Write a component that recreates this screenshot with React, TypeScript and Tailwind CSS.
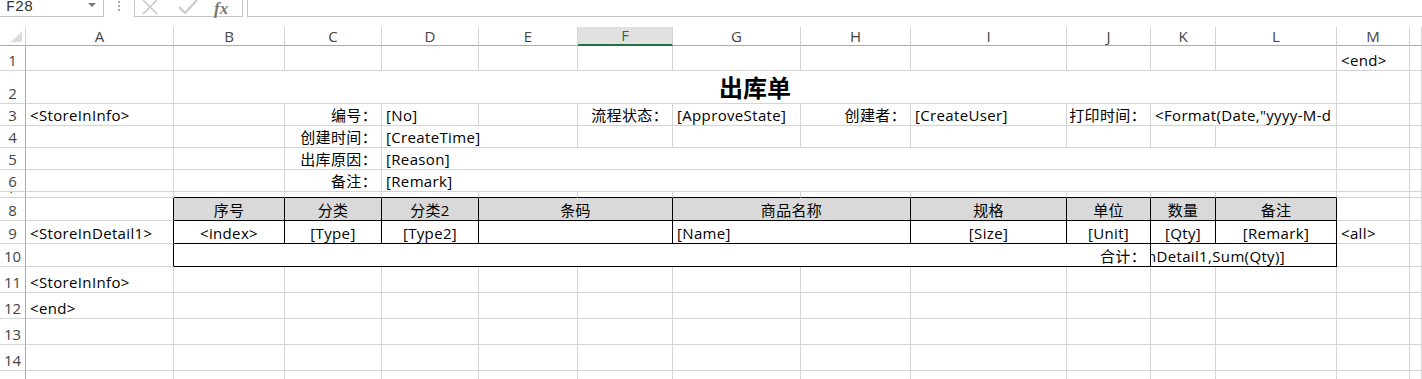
import clsx from "clsx";
import type { ReactNode } from "react";

type Cell = {
  t?: ReactNode;
  s?: string;
  a?: "l" | "c" | "r";
  kr?: boolean;
  kb?: boolean;
  hd?: boolean;
};

const LETTERS = ["A", "B", "C", "D", "E", "F", "G", "H", "I", "J", "K", "L", "M", ""];

const e = (n: number, extra: Partial<Cell> = {}): Cell[] => Array.from({ length: n }, () => ({ ...extra }));
const tb = (c: Cell): Cell => ({ ...c, kr: true, kb: true });

const ROWS: Array<{ n: string; cells: Cell[] }> = [
  { n: "1", cells: [...e(12), { t: "<end>" }, {}] },
  {
    n: "2",
    cells: [
      {},
      { t: <span className="text-[24px] font-bold leading-[30px] tracking-normal">出库单</span>, s: "col-span-11", a: "c" },
      {},
      {},
    ],
  },
  {
    n: "3",
    cells: [
      { t: "<StoreInInfo>" },
      {},
      { t: "编号：", a: "r" },
      { t: "[No]" },
      {},
      { t: "流程状态：", a: "r" },
      { t: "[ApproveState]" },
      { t: "创建者：", a: "r" },
      { t: "[CreateUser]" },
      { t: "打印时间：", a: "r" },
      { t: '<Format(Date,"yyyy-M-d HH:mm")>', s: "col-span-2" },
      {},
      {},
    ],
  },
  {
    n: "4",
    cells: [{}, {}, { t: "创建时间：", a: "r" }, { t: "[CreateTime]", s: "col-span-2" }, ...e(9)],
  },
  { n: "5", cells: [{}, {}, { t: "出库原因：", a: "r" }, { t: "[Reason]", s: "col-span-9" }, {}, {}] },
  { n: "6", cells: [{}, {}, { t: "备注：", a: "r" }, { t: "[Remark]", s: "col-span-9" }, {}, {}] },
  { n: "7", cells: [{}, ...e(11, { kb: true }), {}, {}] },
  {
    n: "8",
    cells: [
      { kr: true },
      ...[
        { t: "序号" },
        { t: "分类" },
        { t: "分类2" },
        { t: "条码", s: "col-span-2" },
        { t: "商品名称", s: "col-span-2" },
        { t: "规格" },
        { t: "单位" },
        { t: "数量" },
        { t: "备注" },
      ].map((c) => tb({ ...c, a: "c", hd: true })),
      {},
      {},
    ],
  },
  {
    n: "9",
    cells: [
      { t: "<StoreInDetail1>", kr: true },
      ...[
        { t: "<index>", a: "c" as const },
        { t: "[Type]", a: "c" as const },
        { t: "[Type2]", a: "c" as const },
        { s: "col-span-2" },
        { t: "[Name]", s: "col-span-2" },
        { t: "[Size]", a: "c" as const },
        { t: "[Unit]", a: "c" as const },
        { t: "[Qty]", a: "c" as const },
        { t: "[Remark]", a: "c" as const },
      ].map(tb),
      { t: "<all>" },
      {},
    ],
  },
  {
    n: "10",
    cells: [
      { kr: true },
      tb({ t: "合计：", s: "col-span-9", a: "r" }),
      tb({
        t: <span className="pr-[47px]">[StoreInDetail1,Sum(Qty)]</span>,
        s: "col-span-2",
        a: "r",
      }),
      {},
      {},
    ],
  },
  { n: "11", cells: [{ t: "<StoreInInfo>" }, ...e(13)] },
  { n: "12", cells: [{ t: "<end>" }, ...e(13)] },
  { n: "13", cells: e(14) },
  { n: "14", cells: e(14) },
  { n: "15", cells: e(14) },
];

function SheetCell({ c }: { c: Cell }) {
  return (
    <div
      className={clsx(
        "flex items-end overflow-hidden whitespace-nowrap border-r border-b px-[4px] leading-[20px]",
        c.s,
        c.kr ? "border-r-black" : "border-r-[#d4d4d4]",
        c.kb ? "border-b-black" : "border-b-[#d4d4d4]",
        c.a === "c" ? "justify-center" : c.a === "r" ? "justify-end" : "justify-start",
        c.hd && "bg-[#d9d9d9]",
      )}
    >
      {c.t}
    </div>
  );
}

function FormulaBar() {
  return (
    <div className="flex h-[27px] items-start bg-white">
      <div className="relative flex h-[17px] w-[104px] items-center border-r border-b border-[#c6c6c6] pl-[6px] font-['Liberation_Mono',monospace] text-[15px] tracking-normal text-[#333]">
        F28
        <span className="absolute top-[3px] right-[7px] h-0 w-0 border-x-[4px] border-t-[4px] border-x-transparent border-t-[#777]" />
      </div>
      <div className="flex w-[30px] flex-col items-center gap-[2px] pt-[1px]">
        <span className="h-[2px] w-[2px] bg-[#aaa]" />
        <span className="h-[2px] w-[2px] bg-[#aaa]" />
        <span className="h-[2px] w-[2px] bg-[#aaa]" />
      </div>
      <div className="flex h-[17px] w-[109px] items-center border-x border-b border-[#c6c6c6]">
        <svg width="18" height="16" viewBox="0 0 18 16" className="ml-[6px]">
          <path d="M2 0 L16 14 M16 0 L2 14" stroke="#c8c8c8" strokeWidth="1.6" fill="none" />
        </svg>
        <svg width="22" height="16" viewBox="0 0 22 16" className="ml-[18px]">
          <path d="M2 7 L8 13 L20 0" stroke="#c8c8c8" strokeWidth="2" fill="none" />
        </svg>
        <span className="ml-[15px] font-['Liberation_Serif',serif] text-[17px] leading-none font-bold tracking-normal text-[#777] italic">
          fx
        </span>
      </div>
      <div className="ml-[4px] h-[17px] flex-1 border-b border-l border-[#c6c6c6]" />
    </div>
  );
}

export default function App() {
  return (
    <div className="h-[379px] w-[1422px] overflow-hidden bg-white font-['Open_Sans','Noto_Sans_CJK_SC',sans-serif] text-[15px] tracking-[0.35px] text-black">
      <FormulaBar />
      <div className="grid grid-cols-[26px_148px_111px_97px_97px_99px_95px_128px_110px_156px_84px_65px_121px_73px_1fr] grid-rows-[19px_25px_33px_22px_22px_22px_22px_6px_23px_23px_23px_26px_26px_26px_26px_26px]">
        <div className="relative border-r border-b border-r-[#d4d4d4] border-b-[#ababab]">
          <span className="absolute right-[3px] bottom-[3px] h-0 w-0 border-b-[11px] border-l-[11px] border-b-[#dcdcdc] border-l-transparent" />
        </div>
        {LETTERS.map((l, i) => (
          <div
            key={i}
            className={clsx(
              "flex items-center justify-center border-r border-b border-r-[#d4d4d4] text-[15px] leading-none tracking-normal",
              l === "F"
                ? "border-b-2 border-b-[#217346] bg-[#e1e1e1] text-[#217346]"
                : "border-b-[#ababab] text-[#444]",
            )}
          >
            {l}
          </div>
        ))}
        {ROWS.map((row) => (
          <div key={row.n} className="contents">
            <div className="flex items-end justify-center overflow-hidden border-r border-b border-r-[#ababab] border-b-[#d4d4d4] text-[15px] leading-[20px] tracking-normal text-[#444]">
              {row.n}
            </div>
            {row.cells.map((c, i) => (
              <SheetCell key={i} c={c} />
            ))}
          </div>
        ))}
      </div>
    </div>
  );
}
